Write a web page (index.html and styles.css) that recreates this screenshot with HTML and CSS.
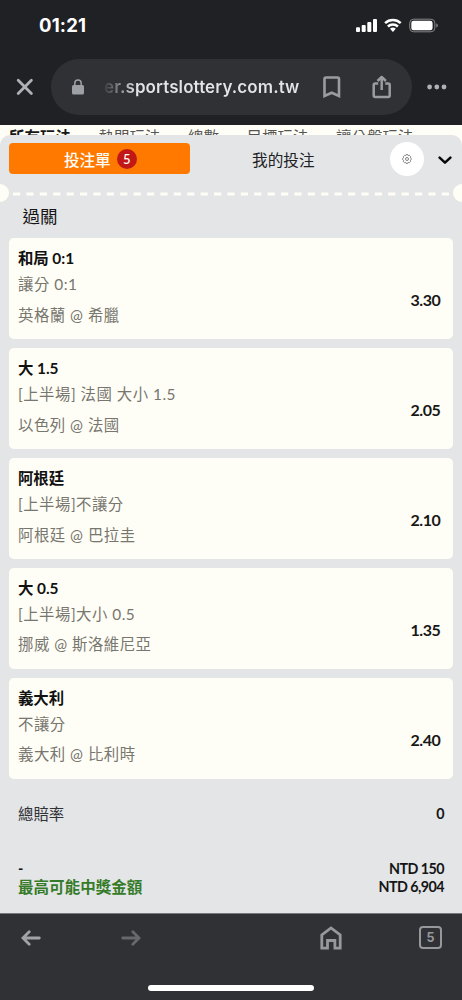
FILE: index.html
```html
<!DOCTYPE html>
<html lang="zh-Hant">
<head>
<meta charset="utf-8">
<meta name="viewport" content="width=device-width, initial-scale=1">
<title>投注單</title>
<link rel="stylesheet" href="styles.css">
</head>
<body>
<div class="phone">
  <header class="chrome">
    <div class="status">
      <span class="clock">01:21</span>
      <svg class="status-icons" width="84" height="16" viewBox="0 0 84 16" fill="#fff">
        <rect x="0" y="9.3" width="4" height="4.7" rx="1"/><rect x="5.7" y="7" width="4" height="7" rx="1"/><rect x="11.3" y="4" width="4" height="10" rx="1"/><rect x="17" y="1" width="4" height="13" rx="1"/>
        <g fill="none" stroke="#fff" stroke-width="2.5"><path d="M29.1 5.2a11.3 11.3 0 0 1 15.6 0"/><path d="M31.9 8.5a7.2 7.2 0 0 1 10 0"/></g><path d="M34 10.8a4.3 4.3 0 0 1 5.8 0L36.9 14z"/>
        <rect x="53.7" y="1.2" width="25.2" height="12.6" rx="4" fill="none" stroke="#86878a"/><rect x="55.3" y="2.8" width="21.300" height="9.4" rx="2.3"/><path d="M80.3 5.5v4c2.1-.7 2.1-3.3 0-4z" fill="#86878a"/>
      </svg>
    </div>
    <div class="address-row">
      <svg width="18" height="18" viewBox="0 0 18 18" fill="none" stroke="#aeb1b5" stroke-width="2.8" stroke-linecap="round"><path d="M2.2 2.2l13.2 13.2M15.4 2.2L2.2 15.4"/></svg>
      <div class="address">
        <svg class="lock" width="12" height="16" viewBox="0 0 12 16"><rect y="6" width="12" height="9.5" rx="1.5" fill="#9da0a4"/><path d="M2.8 6V4.2a3.2 3.2 0 0 1 6.4 0V6" fill="none" stroke="#9da0a4" stroke-width="1.5"/></svg>
        <span class="url">er.sportslottery.com.tw</span>
        <svg class="bookmark" width="18" height="22" viewBox="0 0 18 22" fill="none" stroke="#9a9ca0" stroke-width="2.6"><path d="M1.500 20V3Q1.500 1.500 3 1.500h11.500Q16 1.500 16 3v17L8.750 16.700z"/></svg>
        <svg class="share" width="20" height="24" viewBox="0 0 20 24" fill="none" stroke="#9a9ca0" stroke-width="2.5" stroke-linejoin="round"><path d="M6.2 8.500H3.2Q1.7 8.500 1.7 10v10.500q0 1.5 1.5 1.5h13q1.5 0 1.5-1.5V10Q17.7 8.500 16.200 8.500h-3M9.700 15V2.500M5.500 6l4.200-4L13.900 6"/></svg>
      </div>
      <svg class="more" width="20" height="6" viewBox="0 0 20 6" fill="#aeb1b5"><circle cx="2.6" cy="3" r="2.4"/><circle cx="9.8" cy="3" r="2.4"/><circle cx="17" cy="3" r="2.4"/></svg>
    </div>
  </header>

  <nav class="markets"><b>所有玩法</b><span>熱門玩法</span><span>總數</span><span>目標玩法</span><span>讓分盤玩法</span></nav>

  <main class="slip">
    <div class="slip-tabs">
      <button class="slip-tab active">投注單<span class="count">5</span></button>
      <button class="slip-tab">我的投注</button>
      <span class="settings"><svg width="10" height="10" viewBox="0 0 10 10" fill="none" stroke="#666" stroke-width=".8"><path d="M4 .7h2l.4 1 1-.3 1.300 1.300-.4 1 .9.700v1.300l-.9.700.4 1-1.300 1.300-1-.4-.4 1H4l-.5-1-1 .4-1.300-1.300.4-1-.9-.7V4.400l.9-.7-.4-1 1.300-1.300 1 .3z"/><circle cx="5" cy="5" r="1.500"/></svg></span>
      <svg class="chevron" width="14" height="9" viewBox="0 0 14 9" fill="none" stroke="#080808" stroke-width="2.5" stroke-linecap="round" stroke-linejoin="round"><path d="M1.600 1.600L7 6.700l5.400-5.100"/></svg>
    </div>
    <div class="perforation">
      <i class="notch"></i>
      <svg class="dashes" width="438" height="4" viewBox="0 0 438 4"><path d="M1 2H438" stroke="#fffef6" stroke-width="3.200" stroke-dasharray="7.200 6.200"/></svg>
      <i class="notch"></i>
    </div>
    <h1>過關</h1>
    <section class="bets">
      <article class="bet"><div><h2>和局 0:1</h2><p>讓分 0:1</p><p class="match">英格蘭 @ 希臘</p></div><strong>3.30</strong></article>
      <article class="bet"><div><h2>大 1.5</h2><p>[上半場] 法國 大小 1.5</p><p class="match">以色列 @ 法國</p></div><strong>2.05</strong></article>
      <article class="bet"><div><h2>阿根廷</h2><p>[上半場]不讓分</p><p class="match">阿根廷 @ 巴拉圭</p></div><strong>2.10</strong></article>
      <article class="bet"><div><h2>大 0.5</h2><p>[上半場]大小 0.5</p><p class="match">挪威 @ 斯洛維尼亞</p></div><strong>1.35</strong></article>
      <article class="bet"><div><h2>義大利</h2><p>不讓分</p><p class="match">義大利 @ 比利時</p></div><strong>2.40</strong></article>
    </section>
    <section class="totals">
      <div class="total odds"><span>總賠率</span><b>0</b></div>
      <div class="total"><b>-</b><b>NTD 150</b></div>
      <div class="total"><b class="prize">最高可能中獎金額</b><b>NTD 6,904</b></div>
    </section>
  </main>

  <footer class="toolbar">
    <div class="tools">
      <svg width="20" height="16" viewBox="0 0 20 16" fill="none" stroke="#a1a3a7" stroke-width="2.800" stroke-linecap="round"><path d="M18.300 8H3M8.200 1.800L2 8l6.200 6.200"/></svg>
      <svg width="20" height="16" viewBox="0 0 20 16" fill="none" stroke="#66686b" stroke-width="2.800" stroke-linecap="round"><path d="M1.700 8H17M11.800 1.800L18 8l-6.200 6.200"/></svg>
      <svg class="home" width="22" height="24" viewBox="0 0 22 24" fill="none" stroke="#96989c" stroke-width="2.800"><path d="M1.800 22.200V9L11 2l9.200 7v13.200h-5.300V14.500H7.500v7.700z"/></svg>
      <span class="tab-count">5</span>
    </div>
    <i class="home-bar"></i>
  </footer>
</div>
</body>
</html>
```

FILE: styles.css
```css
* { box-sizing: border-box; }
body { margin: 0; background: #202124; }
h1, h2, p { margin: 0; }
svg { display: block; flex: none; }
.phone {
  width: 462px; height: 1000px; overflow: hidden;
  display: flex; flex-direction: column;
  background: #fffef6;
  font-family: Lato, "Noto Sans CJK TC", sans-serif;
}
.chrome { height: 125px; flex: none; background: #202124; font-family: Inter, sans-serif; }
.status { height: 50px; padding: 0 22px 0 39px; display: flex; justify-content: space-between; align-items: center; }
.clock { color: #fff; font-size: 18.5px; font-weight: 700; letter-spacing: .2px; }
.status-icons { margin-top: 1px; }
.address-row { height: 74px; padding: 0 14px 0 16px; display: flex; align-items: center; }
.address {
  width: 361px; height: 56px; margin-left: 17px; padding-left: 21px;
  display: flex; align-items: center;
  border-radius: 28px; background: #303134;
}
.url {
  width: 199px; margin-left: 20px;
  font-size: 17px; font-weight: 600; line-height: 24px; letter-spacing: .1px; white-space: nowrap;
  color: transparent; background: linear-gradient(90deg, #3a3b3e, #77797c 12px, #e3e4e6 32px);
  background-clip: text; -webkit-background-clip: text;
}
.bookmark { margin-left: 20px; }
.share { margin-left: 31px; }
.more { margin-left: 15px; }
.markets {
  height: 10px; flex: none; overflow: hidden; padding: 1px 0 0 9px;
  display: flex; gap: 27.5px; white-space: nowrap;
  font-size: 15.5px; line-height: 22px; color: #555;
}
.markets b { color: #161616; }
.slip { height: 778px; flex: none; background: #e4e5e7; border-radius: 10px 10px 0 0; }
.slip-tabs { height: 48px; padding: 0 10.5px 0 9px; display: flex; align-items: center; }
.slip-tab {
  width: 188px; height: 31px; padding: 0; border: 0; border-radius: 4px;
  display: flex; align-items: center; justify-content: center; gap: 6px;
  background: none; color: #202124; font: 400 15.6px Lato, "Noto Sans CJK TC", sans-serif;
}
.slip-tab.active { width: 181px; margin-top: -1px; padding-left: 2px; background: #ff7900; color: #fffef6; font-weight: 500; }
.count { width: 20px; height: 20px; border-radius: 50%; background: #c21717; font-size: 13px; line-height: 20px; text-align: center; }
.settings { width: 34px; height: 34px; margin-left: 12.500px; border-radius: 50%; background: #fff; display: flex; align-items: center; justify-content: center; }
.chevron { margin: 2px 0 0 14px; }
.perforation { height: 19px; display: flex; align-items: center; justify-content: space-between; }
.dashes { margin-top: 2px; }
.notch { width: 9px; height: 18px; flex: none; background: #fffef6; border-radius: 0 9px 9px 0; }
.notch:last-child { border-radius: 9px 0 0 9px; }
h1 { height: 36.300px; padding: 3px 0 0 22.500px; font-size: 17.5px; line-height: 24px; font-weight: 400; color: #161616; }
.bets { padding: 0 9px; display: grid; gap: 9px; }
.bet {
  height: 100.900px; padding: 9px 12.500px 0 9px;
  display: flex; justify-content: space-between;
  border-radius: 5px; background: #fffef6;
}
.bet h2 { font-size: 15.4px; font-weight: 700; line-height: 22px; letter-spacing: -.05px; color: #111; }
.bet p { margin-top: 4px; font-size: 15.4px; line-height: 22px; letter-spacing: .5px; color: #77766f; white-space: nowrap; }
.bet .match { margin-top: 8.500px; }
.bet strong { margin-top: 42px; font-size: 16px; line-height: 22px; font-weight: 700; letter-spacing: -.4px; color: #181817; }
.totals { padding: 23px 18px 0; }
.total { height: 18.500px; display: flex; justify-content: space-between; align-items: center; font-size: 14.300px; line-height: 18px; color: #141516; }
.total b { letter-spacing: -.55px; }
.total.odds { height: 24px; margin-bottom: 33.500px; }
.total span { font-size: 15.400px; color: #303236; }
.total .prize { font-size: 15.500px; letter-spacing: .05px; color: #367b29; }
.toolbar { height: 87px; flex: none; background: #303134; border-top: 1px solid #77787b; font-family: Inter, sans-serif; }
.tools { height: 47px; padding: 0 20px 0 21px; display: flex; align-items: center; gap: 80px; }
.home { margin-left: 99px; }
.tab-count {
  width: 23px; height: 23px; margin-left: -3px;
  border: 2px solid #96989c; border-radius: 4px; color: #96989c;
  font-size: 12.500px; font-weight: 700; line-height: 19px; text-align: center;
}
.home-bar { display: block; width: 166px; height: 6px; margin: 24px auto 0; border-radius: 3px; background: #fff; }
```
